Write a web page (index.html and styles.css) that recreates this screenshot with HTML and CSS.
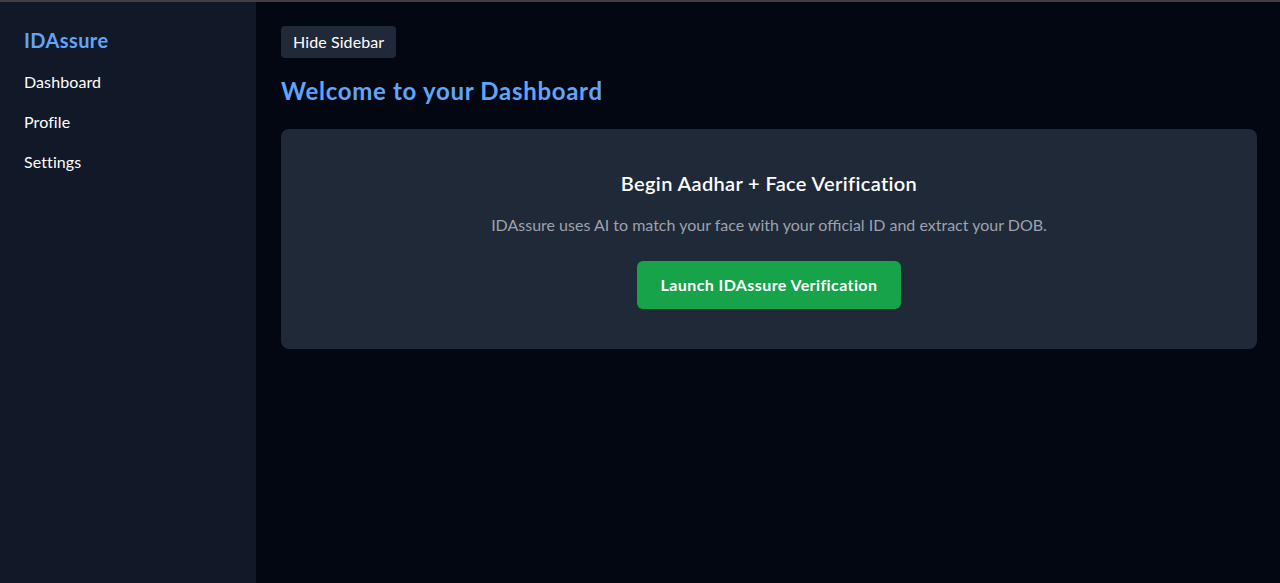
FILE: index.html
```html
<!DOCTYPE html>
<html lang="en">
<head>
<meta charset="utf-8">
<title>IDAssure Dashboard</title>
<link rel="stylesheet" href="styles.css">
</head>
<body>
<div class="topline"></div>
<div class="app">
  <aside class="sidebar">
    <div class="logo">IDAssure</div>
    <nav class="nav">
      <a class="nav-item" href="#">Dashboard</a>
      <a class="nav-item" href="#">Profile</a>
      <a class="nav-item" href="#">Settings</a>
    </nav>
  </aside>
  <main class="main">
    <button class="toggle">Hide Sidebar</button>
    <h1 class="title">Welcome to your Dashboard</h1>
    <section class="card">
      <h2 class="card-title">Begin Aadhar + Face Verification</h2>
      <p class="card-text">IDAssure uses AI to match your face with your official ID and extract your DOB.</p>
      <button class="launch">Launch IDAssure Verification</button>
    </section>
  </main>
</div>
</body>
</html>
```
FILE: styles.css
```css
* { box-sizing: border-box; }
html, body { margin: 0; padding: 0; height: 100%; }
body {
  font-family: "Lato", "Noto Sans", sans-serif;
  background: #030712;
  color: #ffffff;
  display: flex;
  flex-direction: column;
}
.topline { height: 2px; background: #453d44; flex: none; }
.app { display: flex; flex: 1; min-height: 0; }
.sidebar {
  width: 256px;
  flex: none;
  background: #111827;
  padding: 24px;
}
.logo {
  font-size: 20px;
  line-height: 28px;
  font-weight: 700;
  letter-spacing: 0.4px;
  color: #60a5fa;
  margin-bottom: 16px;
}
.nav { display: flex; flex-direction: column; gap: 16px; }
.nav-item {
  color: #ffffff;
  text-decoration: none;
  font-size: 16px;
  line-height: 24px;
  letter-spacing: 0.1px;
}
.main {
  flex: 1;
  padding: 24px 23px 24px 25px;
  display: flex;
  flex-direction: column;
  align-items: flex-start;
}
.toggle {
  font-family: inherit;
  font-size: 16px;
  line-height: 24px;
  letter-spacing: 0.1px;
  padding: 4px 12px;
  background: #1f2937;
  color: #ffffff;
  border: none;
  border-radius: 4px;
  margin-bottom: 17px;
}
.title {
  margin: 0 0 22px;
  font-size: 24px;
  line-height: 32px;
  font-weight: 700;
  letter-spacing: 0.7px;
  color: #60a5fa;
}
.card {
  align-self: stretch;
  background: #1f2937;
  border-radius: 8px;
  padding: 40px;
  display: flex;
  flex-direction: column;
  align-items: center;
  text-align: center;
}
.card-title {
  margin: 0 0 16px;
  font-size: 20px;
  line-height: 28px;
  font-weight: 600;
  letter-spacing: 0.35px;
}
.card-text {
  margin: 0 0 24px;
  font-size: 16px;
  line-height: 24px;
  color: #9ca3af;
}
.launch {
  font-family: inherit;
  font-size: 16px;
  line-height: 24px;
  font-weight: 700;
  letter-spacing: 0.4px;
  color: #ffffff;
  background: #16a34a;
  border: none;
  border-radius: 6px;
  padding: 12px 24px;
}
```
